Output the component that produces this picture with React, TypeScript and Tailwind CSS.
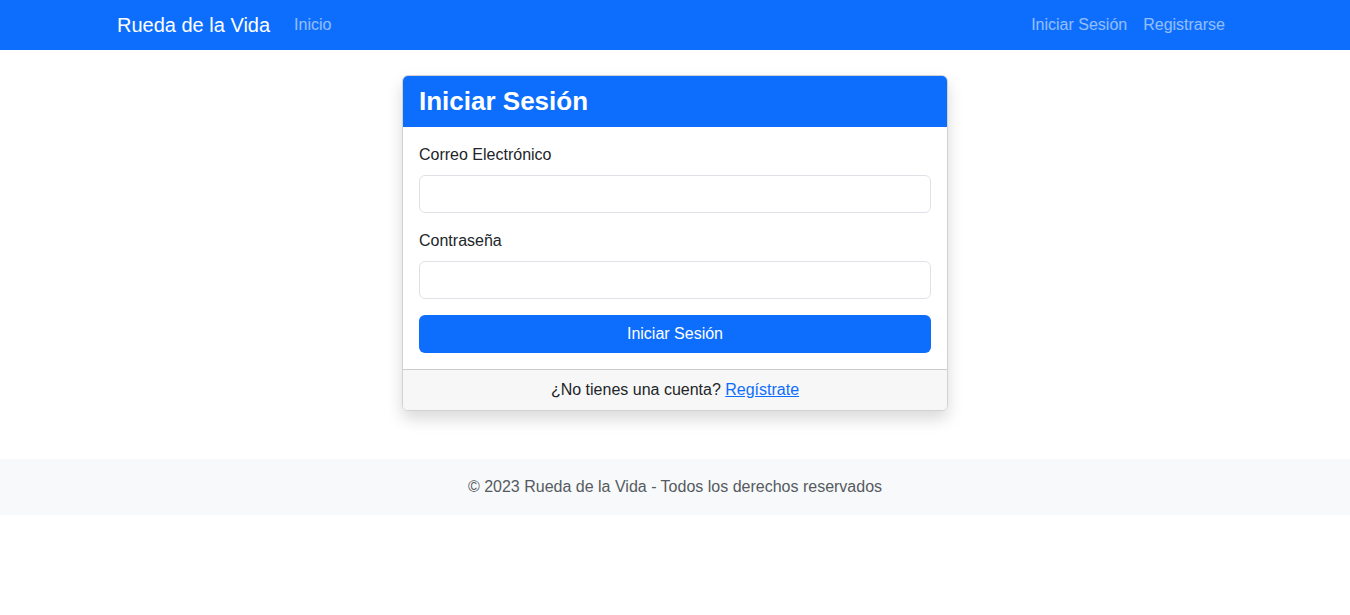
export default function App() {
  return (
    <div className="min-h-[615px] bg-white font-['Segoe_UI','Liberation_Sans',sans-serif] text-[#212529]">
      <nav className="h-[50px] bg-[#0d6efd]">
        <div className="mx-auto flex h-full w-[1140px] items-center px-3">
          <a className="mr-4 text-[20px] leading-[30px] text-white" href="#">
            Rueda de la Vida
          </a>
          <a className="px-2 text-base text-white/55" href="#">
            Inicio
          </a>
          <div className="ml-auto flex">
            <a className="px-2 text-base text-white/55" href="#">
              Iniciar Sesión
            </a>
            <a className="px-2 text-base text-white/55" href="#">
              Registrarse
            </a>
          </div>
        </div>
      </nav>

      <main className="mx-auto mt-[25px] w-[1140px] px-3">
        <div className="mx-auto w-[546px] overflow-hidden rounded-md border border-black/[0.175] shadow-[0_8px_16px_rgba(0,0,0,0.15)]">
          <div className="flex h-[51px] items-center bg-[#0d6efd] px-4">
            <h3 className="text-[26px] font-bold leading-[1.2] text-white">Iniciar Sesión</h3>
          </div>
          <form className="p-4">
            <div className="mb-4">
              <label className="mb-2 block text-base leading-6">Correo Electrónico</label>
              <input
                type="email"
                className="block h-[38px] w-full rounded-md border border-[#dee2e6] px-3 outline-none"
              />
            </div>
            <div className="mb-4">
              <label className="mb-2 block text-base leading-6">Contraseña</label>
              <input
                type="password"
                className="block h-[38px] w-full rounded-md border border-[#dee2e6] px-3 outline-none"
              />
            </div>
            <button
              type="button"
              className="h-[38px] w-full rounded-md bg-[#0d6efd] text-base text-white"
            >
              Iniciar Sesión
            </button>
          </form>
          <div className="border-t border-black/[0.175] bg-[#f7f7f7] px-4 py-2 text-center text-base leading-6">
            ¿No tienes una cuenta?{" "}
            <a href="#" className="text-[#0d6efd] underline">
              Regístrate
            </a>
          </div>
        </div>
      </main>

      <footer className="mt-12 bg-[#f8f9fa] py-4 text-center text-base leading-6 text-[#555b61]">
        © 2023 Rueda de la Vida - Todos los derechos reservados
      </footer>
    </div>
  );
}
